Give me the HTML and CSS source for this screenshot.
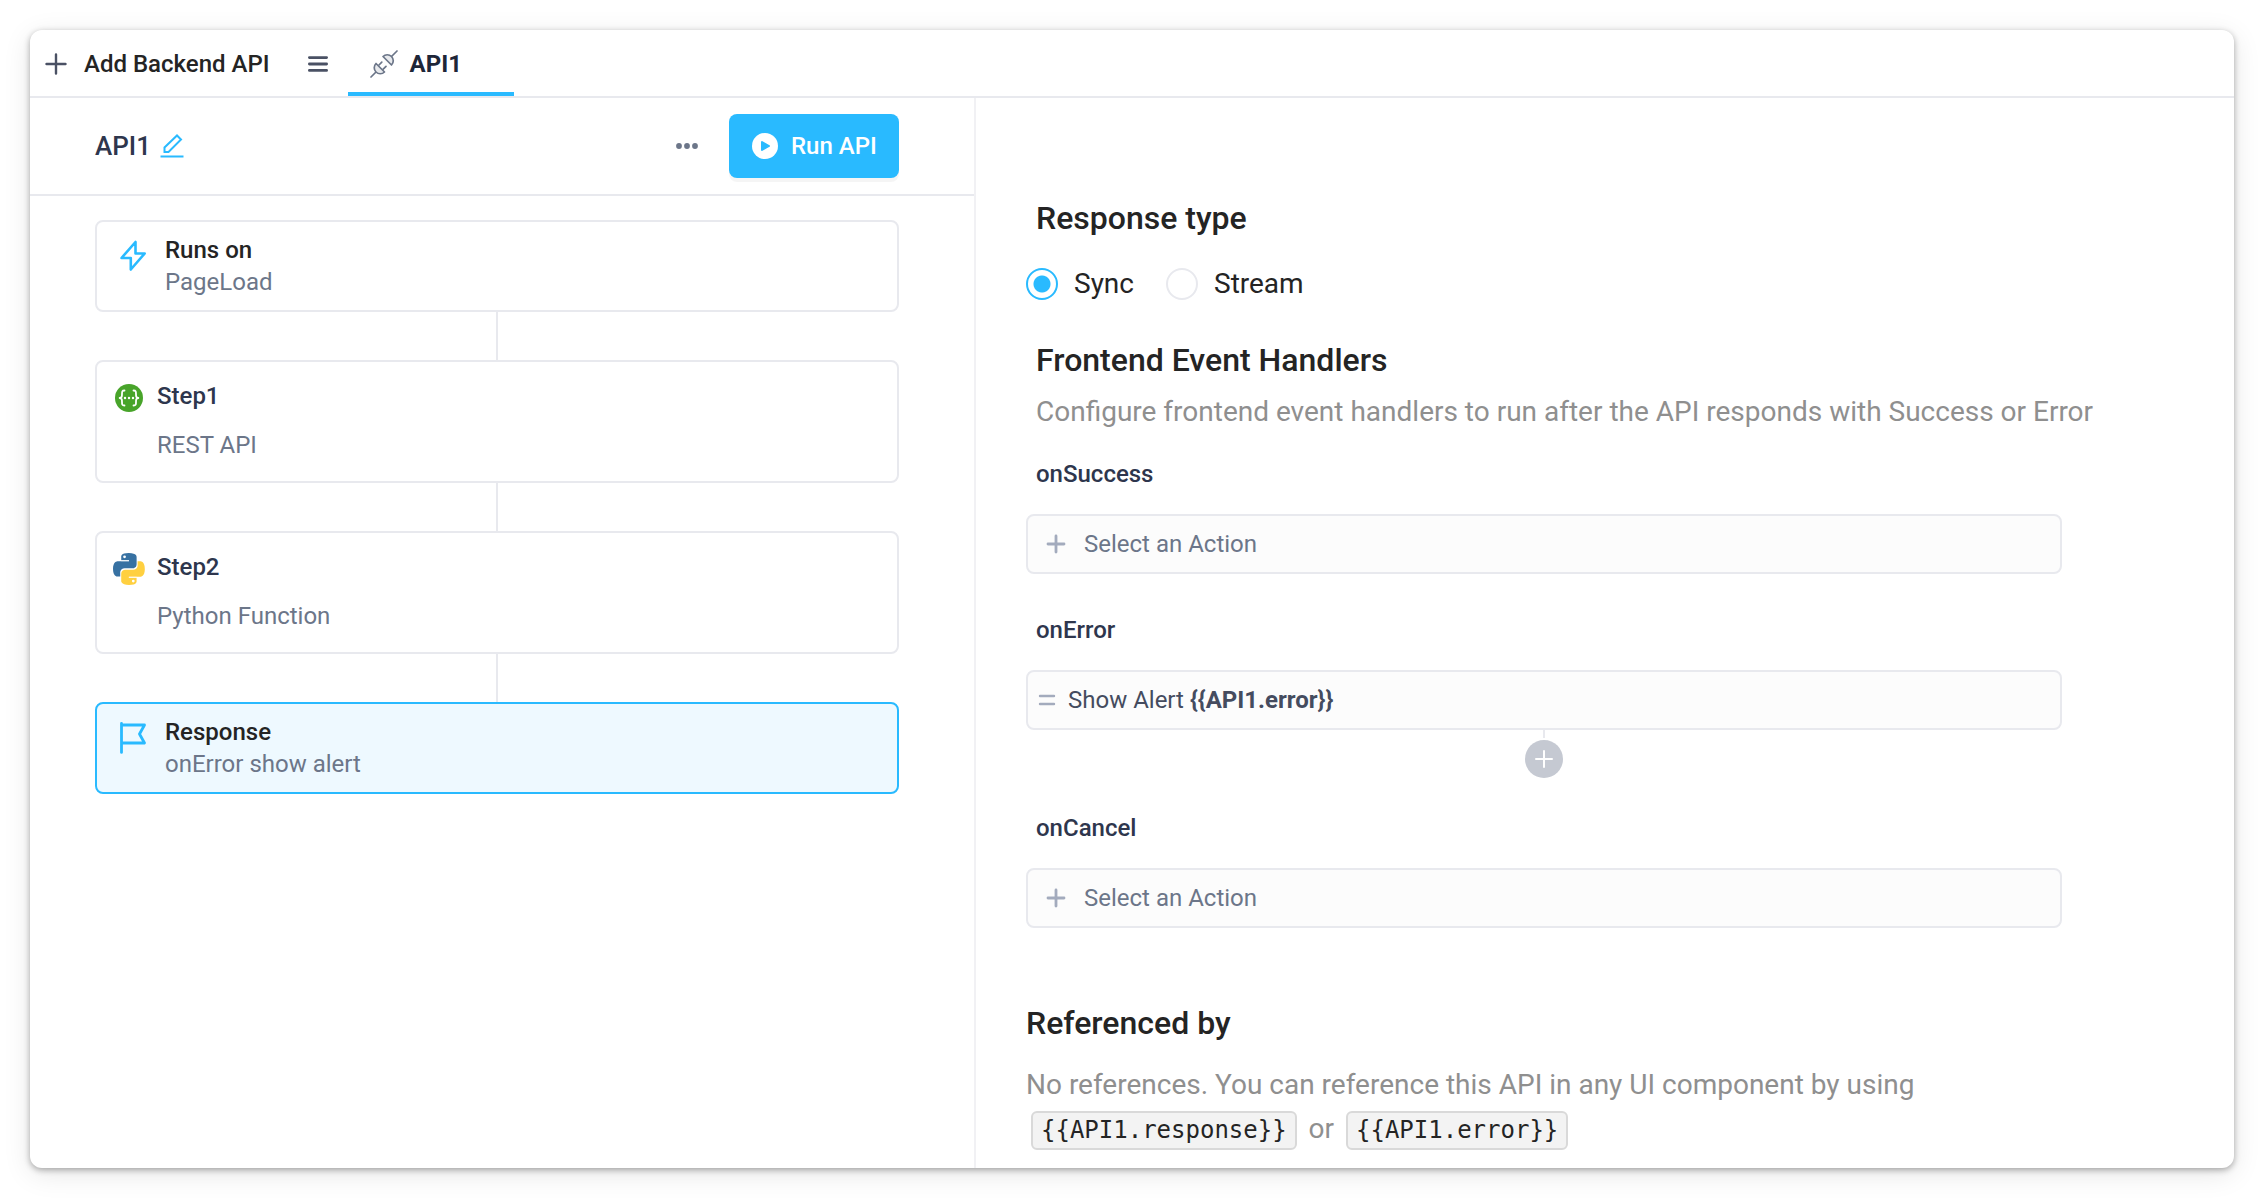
FILE: index.html
```html
<!DOCTYPE html>
<html lang="en">
<head>
<meta charset="utf-8">
<title>API1</title>
<link rel="stylesheet" href="styles.css">
</head>
<body>
<div class="window">
  <nav class="tabbar">
    <button class="add-api" type="button">
      <svg width="22" height="22" viewBox="0 0 22 22" fill="none" stroke="#4a5164" stroke-width="2.4" stroke-linecap="round"><path d="M11 1.5v19M1.5 11h19"/></svg>
      Add Backend API
    </button>
    <button class="menu" type="button" aria-label="All APIs">
      <svg width="20" height="16" viewBox="0 0 20 16" fill="none" stroke="#4a5164" stroke-width="2.8" stroke-linecap="round"><path d="M1.400 1.600h17.200M1.400 8h17.200M1.400 14.400h17.200"/></svg>
    </button>
    <a class="tab" href="#api1">
      <svg width="28" height="28" viewBox="0 0 28 28" fill="#e8eaed" stroke="#6c7689" stroke-width="1.700" stroke-linecap="round" stroke-linejoin="round">
        <path d="M1 27l5-5M27 1l-5.500 5.500" fill="none"/>
        <path d="M6 13.500l8.500 8.500a6 6 0 0 1-8.500-8.500z"/>
        <path d="M13 6.500l8.500 8.500a6 6 0 0 0-8.500-8.500z"/>
        <path d="M9 15l2.800-2.800M13.200 19.200l2.800-2.800" fill="none"/>
      </svg>
      API1
    </a>
  </nav>
  <div class="panes">
    <section class="flow" id="api1">
      <header class="flow-head">
        <h1 class="api-name">API1</h1>
        <button class="icon-button" type="button" aria-label="Rename">
          <svg width="24" height="24" viewBox="0 0 24 24" fill="none" stroke="#29baff" stroke-width="2"><path d="M4.500 18v-4.500L17 1.500l4 4L8.500 18zM0.500 22.500h23"/></svg>
        </button>
        <button class="icon-button more" type="button" aria-label="More">
          <svg width="22" height="6" viewBox="0 0 22 6" fill="#6c7689"><circle cx="3" cy="3" r="2.900"/><circle cx="11" cy="3" r="2.900"/><circle cx="19" cy="3" r="2.900"/></svg>
        </button>
        <button class="run" type="button">
          <svg width="26" height="26" viewBox="0 0 26 26"><circle cx="13" cy="13" r="13" fill="#fff"/><path d="M10 9v8l7-4z" fill="#29baff" stroke="#29baff" stroke-width="2" stroke-linejoin="round"/></svg>
          Run API
        </button>
      </header>
      <ol class="steps">
        <li class="card">
          <svg class="card-icon" width="26" height="32" viewBox="0 0 26 32" fill="none" stroke="#29baff" stroke-width="2.600" stroke-linejoin="round"><path d="M15.500 2v11.500h9.200L10.800 29.500V18H1.500z"/></svg>
          <div><h2 class="card-title">Runs on</h2><p class="card-sub">PageLoad</p></div>
        </li>
        <li class="card card-step">
          <svg class="card-icon" width="32" height="32" viewBox="0 0 32 32"><circle cx="16" cy="16" r="14" fill="#48a42a"/><g fill="none" stroke="#fff" stroke-width="1.800" stroke-linecap="round" stroke-linejoin="round"><path d="M11.500 8.500c-2.500 0-2.500 1-2.500 3.500s0 3.500-2.300 4c2.300.5 2.300 1.500 2.300 4s0 3.500 2.500 3.500M20.500 8.500c2.500 0 2.500 1 2.500 3.500s0 3.500 2.300 4c-2.300.5-2.300 1.500-2.300 4s0 3.500-2.500 3.500"/></g><g fill="#fff"><circle cx="12" cy="16" r="1.200"/><circle cx="16" cy="16" r="1.200"/><circle cx="20" cy="16" r="1.200"/></g></svg>
          <div><h2 class="card-title">Step1</h2><p class="card-sub">REST API</p></div>
        </li>
        <li class="card card-step">
          <svg class="card-icon" width="32" height="32" viewBox="0 0 110 110"><path fill="#3771a2" d="M54.300 0C26.500 0 28.300 12 28.300 12v12.500h26.500v3.700H17.800S0 26.200 0 54.200s15.500 26.900 15.500 26.900h9.300v-13s-.5-15.500 15.300-15.500h26.300s14.800.2 14.800-14.300V14.300S83.500 0 54.300 0zM39.700 8.400a4.800 4.800 0 1 1 0 9.600 4.800 4.800 0 0 1 0-9.600z"/><path fill="#ffd040" d="M55.100 109.800c27.800 0 26-12 26-12V85.300H54.600v-3.700h37s17.800 2 17.800-26-15.500-26.900-15.500-26.900h-9.300v13s.5 15.500-15.300 15.500H43s-14.800-.2-14.800 14.300v24s-2.200 14.300 26.900 14.300zm14.600-8.400a4.800 4.800 0 1 1 0-9.600 4.800 4.800 0 0 1 0 9.600z"/><path d="M28 26.300h27M54.500 83.500h27" stroke="#fff" stroke-opacity=".6" stroke-width="3.700"/></svg>
          <div><h2 class="card-title">Step2</h2><p class="card-sub">Python Function</p></div>
        </li>
        <li class="card card-active">
          <svg class="card-icon" width="26" height="32" viewBox="0 0 26 32" fill="none" stroke="#29baff" stroke-width="2.800" stroke-linecap="round" stroke-linejoin="round"><path d="M1.500 1.400v29M1.500 3h23l-5 9 5 9h-23"/></svg>
          <div><h2 class="card-title">Response</h2><p class="card-sub">onError show alert</p></div>
        </li>
      </ol>
    </section>
    <section class="settings">
      <fieldset class="response-type">
        <legend class="heading indent">Response type</legend>
        <div class="radios">
          <label class="radio"><input type="radio" name="type" checked> Sync</label>
          <label class="radio"><input type="radio" name="type"> Stream</label>
        </div>
      </fieldset>
      <h2 class="heading indent">Frontend Event Handlers</h2>
      <p class="note lead indent">Configure frontend event handlers to run after the API responds with Success or Error</p>
      <div class="handlers">
        <div class="handler">
          <h3 class="handler-name indent">onSuccess</h3>
          <button class="action" type="button">
            <svg width="20" height="20" viewBox="0 0 20 20" fill="none" stroke="#a3abbd" stroke-width="2.800" stroke-linecap="round"><path d="M10 2v16M2 10h16"/></svg>
            Select an Action
          </button>
        </div>
        <div class="handler">
          <h3 class="handler-name indent">onError</h3>
          <button class="action action-set" type="button">
            <svg width="18" height="12" viewBox="0 0 18 12" fill="none" stroke="#a3abbd" stroke-width="2.400" stroke-linecap="round"><path d="M2 2h14M2 10h14"/></svg>
            <span>Show Alert <b>{{API1.error}}</b></span>
          </button>
          <button class="append" type="button" aria-label="Add action">
            <svg width="18" height="18" viewBox="0 0 18 18" fill="none" stroke="#fff" stroke-width="2" stroke-linecap="round"><path d="M9 1v16M1 9h16"/></svg>
          </button>
        </div>
        <div class="handler">
          <h3 class="handler-name indent">onCancel</h3>
          <button class="action" type="button">
            <svg width="20" height="20" viewBox="0 0 20 20" fill="none" stroke="#a3abbd" stroke-width="2.800" stroke-linecap="round"><path d="M10 2v16M2 10h16"/></svg>
            Select an Action
          </button>
        </div>
      </div>
      <h2 class="heading references">Referenced by</h2>
      <p class="note">No references. You can reference this API in any UI component by using <br><code>{{API1.response}}</code> or <code>{{API1.error}}</code></p>
    </section>
  </div>
</div>
</body>
</html>
```
FILE: styles.css
```css
* { box-sizing: border-box; }
body {
  margin: 0;
  padding: 30px;
  min-height: 100vh;
  display: flex;
  background: #fff;
  font: 24px/32px Roboto, sans-serif;
  color: #242424;
}
h1, h2, h3, p, ol, fieldset, legend { margin: 0; padding: 0; border: 0; }
button { margin: 0; padding: 0; border: 0; background: none; font: inherit; color: inherit; }
svg { display: block; flex: none; }

.window {
  flex: 1;
  display: flex;
  flex-direction: column;
  background: #fff;
  border-radius: 12px;
  overflow: hidden;
  box-shadow: 0 2px 6px rgba(0, 0, 0, .32), 0 6px 28px rgba(0, 0, 0, .1);
}

.tabbar { display: flex; height: 68px; padding-left: 15px; border-bottom: 2px solid #e8e9ee; }
.add-api { display: flex; align-items: center; gap: 17px; padding-top: 2px; font-weight: 500; }
.menu { padding: 2px 20px 0 38px; }
.tab {
  display: flex;
  align-items: center;
  gap: 12px;
  width: 166px;
  padding: 6px 0 0 22px;
  border-bottom: 4px solid #29baff;
  font-weight: 700;
  color: #1e2638;
  text-decoration: none;
}

.panes { flex: 1; display: flex; }
.flow { width: 946px; flex: none; border-right: 2px solid #f1f1f4; }
.flow-head {
  display: flex;
  align-items: center;
  height: 98px;
  padding: 0 75px 0 65px;
  border-bottom: 2px solid #e8e9ee;
}
.api-name { margin-right: 9px; font-size: 26px; font-weight: 500; color: #2e364d; }
.more { margin-left: auto; margin-right: 31px; }
.run {
  display: flex;
  align-items: center;
  gap: 13px;
  width: 170px;
  height: 64px;
  padding-left: 23px;
  border-radius: 8px;
  background: #29baff;
  box-shadow: 0 4px 0 rgba(0, 0, 0, .04);
  font-weight: 500;
  color: #fff;
}

.steps { display: grid; gap: 48px; padding: 24px 75px 24px 65px; list-style: none; }
.card {
  position: relative;
  display: flex;
  gap: 19px;
  height: 92px;
  padding: 12px 23px;
  border: 2px solid #e8e9ee;
  border-radius: 8px;
}
.card-icon { margin-top: 6px; }
.card + .card::before {
  content: "";
  position: absolute;
  left: 50%;
  bottom: 100%;
  width: 2px;
  height: 48px;
  margin: 0 0 2px -1px;
  background: #e8e9ee;
}
.card-title { font-size: 24px; font-weight: 500; }
.card-sub { color: #6c7689; }
.card-step { gap: 12px; height: 123px; padding: 18px 16px; }
.card-step .card-icon { margin-top: 2px; }
.card-step .card-title { margin-bottom: 17px; color: #2e364d; }
.card-active { background: #eef9ff; border-color: #29baff; }

.settings { flex: 1; padding: 100px 50px 8px 50px; }
.indent { padding-left: 10px; }
.heading { font-size: 32px; line-height: 40px; font-weight: 500; }
.radios { display: flex; gap: 32px; margin: 30px 0 40px; }
.radio { display: flex; align-items: center; gap: 16px; font-size: 28px; }
.radio input {
  appearance: none;
  width: 32px;
  height: 32px;
  margin: 0;
  border: 2px solid #e8e9ee;
  border-radius: 50%;
}
.radio input:checked { border-color: #29baff; background: radial-gradient(circle, #29baff 8px, transparent 9px); }
.note { margin-top: 20px; font-size: 28px; line-height: 44px; color: #8f8f8f; }
.lead { margin-top: 10px; }
.handlers { display: grid; gap: 40px; margin: 24px 122px 0 0; }
.handler-name { font-size: 24px; font-weight: 500; color: #2e364d; }
.action {
  display: flex;
  align-items: center;
  gap: 18px;
  width: 100%;
  height: 60px;
  margin-top: 24px;
  padding: 0 18px;
  border: 2px solid #e8e9ee;
  border-radius: 8px;
  background: #fcfcfc;
  color: #6c7689;
}
.action-set { gap: 12px; padding: 0 10px; color: #454c5f; }
.append {
  position: relative;
  display: grid;
  place-items: center;
  width: 38px;
  height: 38px;
  margin: 10px auto -6px;
  border-radius: 50%;
  background: #c5c9d2;
}
.append::before { content: ""; position: absolute; left: 18px; top: -10px; width: 2px; height: 8px; background: #e8e9ee; }
.references { margin-top: 75px; }
code {
  display: inline-block;
  margin: 0 5px;
  padding: 0 8px;
  border: 2px solid #d9d9d9;
  border-radius: 6px;
  background: #f3f3f3;
  font: 24px/35px "DejaVu Sans Mono", monospace;
  color: #242424;
}
```
